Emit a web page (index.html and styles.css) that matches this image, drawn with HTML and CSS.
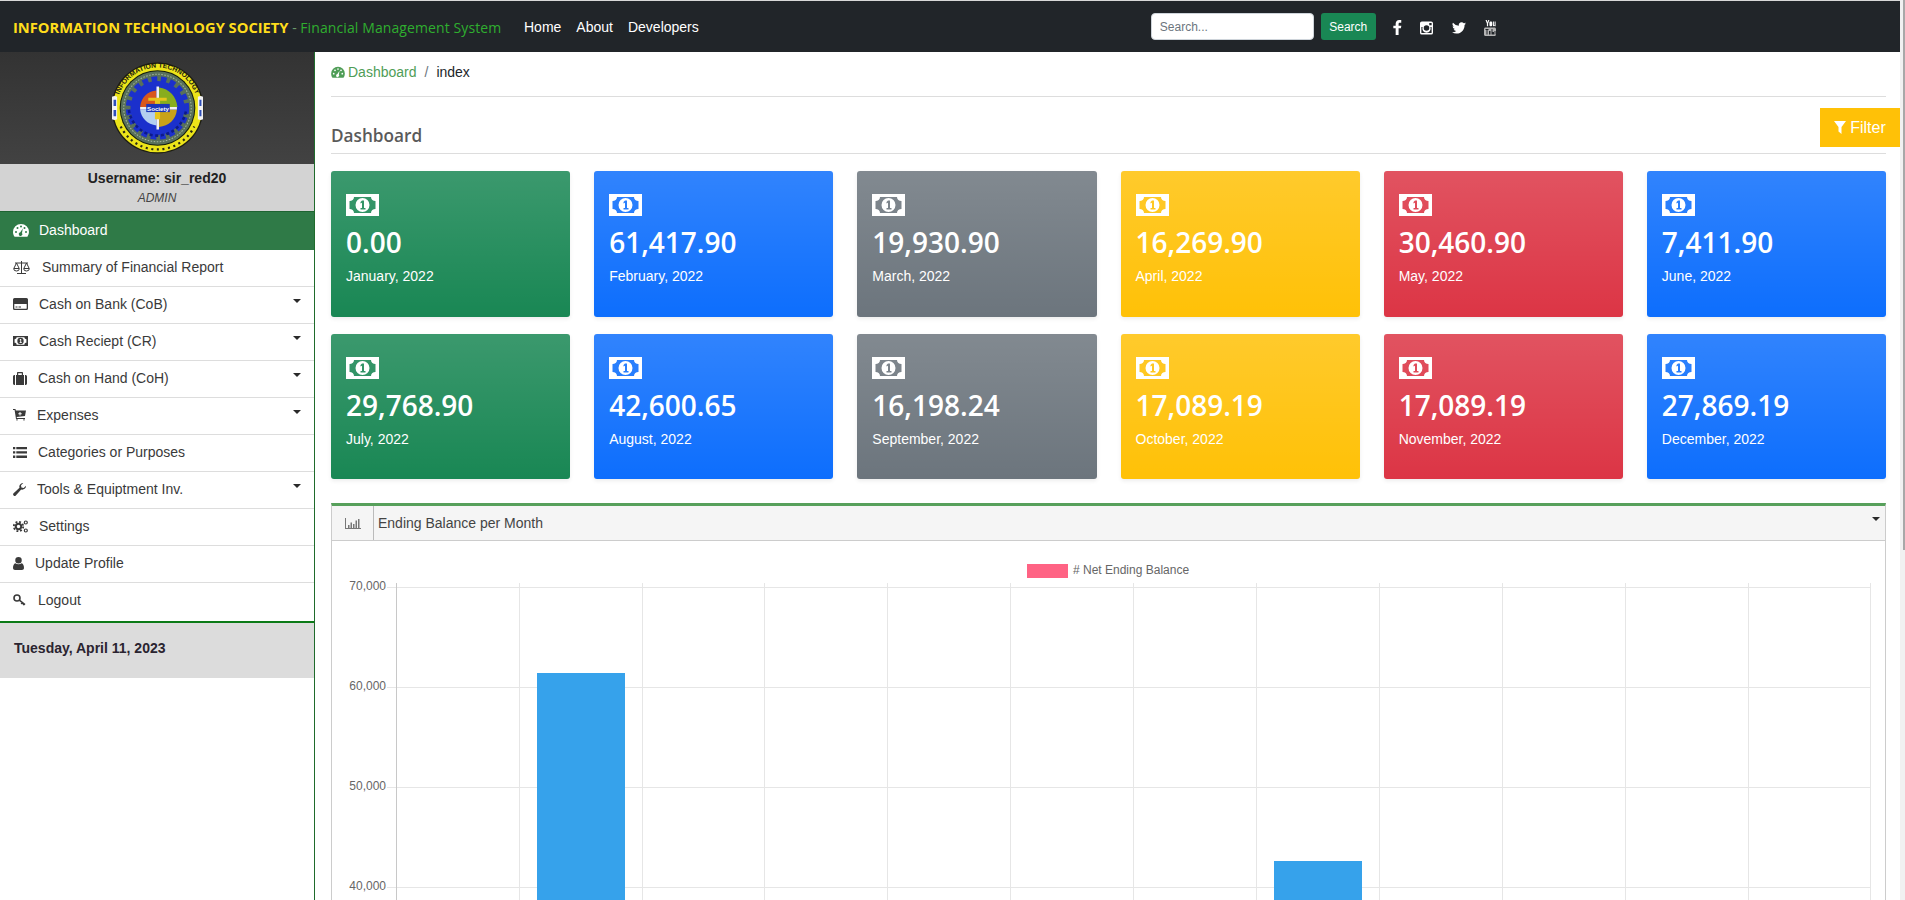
FILE: index.html
```html
<!DOCTYPE html>
<html lang="en">
<head>
<meta charset="utf-8">
<title>Financial Management System</title>
<link rel="stylesheet" href="styles.css">
</head>
<body>
<svg class="defs" width="0" height="0" aria-hidden="true">
  <symbol id="bill" viewBox="0 0 33 22">
    <path fill-rule="evenodd" d="M0 0h33v22H0zM8 3C8 5.500 6 7 3.500 7v8C6 15 8 16.500 8 19h17c0-2.500 2-4 4.500-4V7C27 7 25 5.500 25 3zM16.500 4a7 7 0 1 0 0 14a7 7 0 0 0 0-14zM16 6.500h2v7.500h1.500v1.500h-5V14H16V8.800l-1.500.8V8z"/>
  </symbol>
  <symbol id="gauge" viewBox="0 0 16 14">
    <path fill-rule="evenodd" d="M8 1a8 8 0 0 0-8 8c0 1.800.6 3.400 1.600 4.700h12.800A8 8 0 0 0 16 9a8 8 0 0 0-8-8zM2 9a1 1 0 1 0 2 0a1 1 0 1 0-2 0zM3.500 5a1 1 0 1 0 2 0a1 1 0 1 0-2 0zM7 3.500a1 1 0 1 0 2 0a1 1 0 1 0-2 0zM12 9a1 1 0 1 0 2 0a1 1 0 1 0-2 0zM10.500 5a1 1 0 1 0 2 0a1 1 0 1 0-2 0zM9.800 5.500 7.300 9.300a1.800 1.800 0 1 0 1.700.7z"/>
  </symbol>
</svg>
<div class="fakebar" aria-hidden="true"><div class="fakebar-thumb"></div></div>

<header class="topbar">
  <div class="brand"><span class="brand-org">INFORMATION TECHNOLOGY SOCIETY</span><span class="brand-dash"> - </span><span class="brand-sys">Financial Management System</span></div>
  <nav class="topnav">
    <a>Home</a><a>About</a><a>Developers</a>
  </nav>
  <form class="searchbar">
    <input class="search-input" type="text" placeholder="Search...">
    <button class="search-btn" type="button">Search</button>
  </form>
  <div class="social">
    <svg width="9" height="15" viewBox="0 0 10 18"><path fill="currentColor" d="M9.500 0H7C4.600 0 2.800 1.800 2.800 4.300V7H0v3h2.800v8h3.500v-8h2.800L9.600 7H6.300V4.800c0-.9.400-1.500 1.500-1.500h1.700z"/></svg>
    <svg width="13" height="14" viewBox="0 0 14 14"><path fill="currentColor" fill-rule="evenodd" d="M2 0h10a2 2 0 0 1 2 2v10a2 2 0 0 1-2 2H2a2 2 0 0 1-2-2V2a2 2 0 0 1 2-2zM10 1.500v2.500h2.500V1.500zM1.500 6v6c0 .3.200.5.500.5h10c.3 0 .5-.2.500-.5V6h-1.300a4.500 4.500 0 1 1-8.400 0zM7 4a3 3 0 1 0 0 6a3 3 0 0 0 0-6z"/></svg>
    <svg width="14" height="12" viewBox="0 0 24 20"><path fill="currentColor" d="M24 2.400a10 10 0 0 1-2.800.8A5 5 0 0 0 23.300.5a10 10 0 0 1-3.100 1.200A4.900 4.900 0 0 0 11.800 6.200 14 14 0 0 1 1.700.9a4.900 4.900 0 0 0 1.500 6.600 4.900 4.900 0 0 1-2.200-.6v.1a4.900 4.900 0 0 0 3.900 4.800 5 5 0 0 1-2.200.1 4.900 4.900 0 0 0 4.600 3.400A9.900 9.900 0 0 1 0 17.300 14 14 0 0 0 7.500 19.500c9.100 0 14-7.500 14-14v-.6A10 10 0 0 0 24 2.400z"/></svg>
    <svg width="12" height="16" viewBox="0 0 12 16"><path fill="currentColor" d="M1.500 0h1.300l.7 2.200.7-2.200h1.200L4.100 3.400v2.800H2.900V3.400zM6.800 1.600c.9 0 1.400.5 1.400 1.300v2.100c0 .8-.5 1.300-1.400 1.300s-1.400-.5-1.400-1.300V2.900c0-.8.500-1.300 1.400-1.300zM8.900 1.600h1v3.500c0 .3.400.2.700 0V1.600h1v4.600h-1v-.5c-.7.700-1.700.7-1.700-.4z"/><path fill="#b4b4b4" fill-rule="evenodd" d="M1.500 7.500h9c.8 0 1.500.7 1.500 1.500v5.500c0 .8-.7 1.500-1.500 1.500h-9C.7 16 0 15.300 0 14.500V9c0-.8.700-1.500 1.500-1.500zM1.500 9v1h1v4.500h1V10h1V9zM5 11v3.500h1.500V11zM7.500 9v5.500h2.500V12H8.500V9zM10.500 11v3.500h1V11z"/></svg>
  </div>
</header>

<div class="layout">
  <aside class="sidebar">
    <div class="logo-wrap">
      <svg class="logo" width="95" height="92" viewBox="0 0 92 90">
        <defs><path id="ring-top" d="M6.500 45a39.500 39.500 0 0 1 79 0"/></defs>
        <ellipse cx="46" cy="45" rx="45" ry="44.500" fill="#1d1d12"/>
        <ellipse cx="46" cy="45" rx="43.800" ry="43.300" fill="#ece419"/>
        <path d="M1.500 34c1.700-1 3.500-1 5 0v22c-1.500 1-3.300 1-5 0zM85.500 34c1.700-1 3.500-1 5 0v22c-1.500 1-3.300 1-5 0z" fill="#f3f3f3"/>
        <path d="M3 37h2.500v6H3zM3 47h2.500v6H3zM87 37h2v6h-2zM87 47h2v6h-2z" fill="#2f4fb8"/>
        <path fill="none" stroke="#2a2a15" stroke-width="2.200" stroke-dasharray="2 3.500" d="M10 63a40 40 0 0 0 72 0"/>
        <text class="logo-ring"><textPath href="#ring-top" startOffset="50%" text-anchor="middle">INFORMATION TECHNOLOGY</textPath></text>
        <circle cx="46" cy="45" r="37" fill="#141d10"/>
        <circle cx="46" cy="45" r="36" fill="#58705a"/>
        <circle cx="46" cy="45" r="33" fill="none" stroke="#c8d4c0" stroke-width="1" stroke-dasharray="1.500 1.500" opacity=".7"/>
        <circle cx="46" cy="45" r="28" fill="none" stroke="#1b30cc" stroke-width="6" stroke-dasharray="5.500 3.500"/>
        <circle cx="46" cy="45" r="26.500" fill="#1b30cc"/>
        <path fill="none" stroke="#0c1a8a" stroke-width="2.500" stroke-dasharray="3 2.500" d="M18 47c2 14 14 25 28 25s26-11 28-25"/>
        <path d="M45 28c-9 .5-15 7-16 16h16z" fill="#d9571c"/>
        <path d="M47.500 25c10 1 17 9 18 19H47.500z" fill="#88ad1e"/>
        <path d="M29 46.500h16V62c-9-1-15-7-16-15.500z" fill="#b3cff0"/>
        <path d="M47.500 46.500H65c-1 10-8 16-17.500 17z" fill="#c9a21a"/>
        <path d="M45 24h2.500v42H45zM29 44h36v2.500H29z" fill="#f2f2f2"/>
        <path d="M37 35h18v3H48.500V41h-5v-3H37z" fill="#e8c51c"/>
        <rect x="35" y="41" width="23" height="8" fill="#1d36b8"/>
        <text class="logo-soc" x="46.500" y="47.500">Society</text>
        <path d="M43.500 49h5v7h-5z" fill="#e8c51c"/>
      </svg>
    </div>
    <div class="userbox">
      <div class="user-name">Username: sir_red20</div>
      <div class="user-role">ADMIN</div>
    </div>
    <ul class="menu">
      <li class="menu-item is-active"><svg class="mi" width="16" height="14"><use href="#gauge"/></svg><span>Dashboard</span></li>
      <li class="menu-item"><svg class="mi mi-wide" width="17" height="14" viewBox="0 0 17 14"><path fill="none" stroke="currentColor" d="M8.500 1v12M4 13.500h9M2 3h13M3.500 3 .8 8.500h5.400zM13.500 3l-2.700 5.500h5.400zM.7 8.700a2.800 2.300 0 0 0 5.600 0M10.700 8.700a2.800 2.300 0 0 0 5.600 0"/></svg><span>Summary of Financial Report</span></li>
      <li class="menu-item"><svg class="mi" width="15" height="12" viewBox="0 0 15 12"><path fill="currentColor" fill-rule="evenodd" d="M1.500 0h12A1.500 1.500 0 0 1 15 1.500v9a1.500 1.500 0 0 1-1.500 1.500h-12A1.500 1.500 0 0 1 0 10.500v-9A1.500 1.500 0 0 1 1.500 0zM1.300 6v4.300c0 .2.100.4.400.4h11.600c.3 0 .4-.2.400-.4V6zM2.500 8.500v1h2v-1zM5.500 8.500v1h2.500v-1z"/></svg><span>Cash on Bank (CoB)</span><i class="caret"></i></li>
      <li class="menu-item"><svg class="mi" width="15" height="10"><use href="#bill"/></svg><span>Cash Reciept (CR)</span><i class="caret"></i></li>
      <li class="menu-item"><svg class="mi" width="14" height="13" viewBox="0 0 14 13"><path fill="currentColor" fill-rule="evenodd" d="M0 4.500C0 3.700.7 3 1.500 3H2v10h-.5C.7 13 0 12.300 0 11.500zM12 3h.5c.8 0 1.500.7 1.500 1.500v7c0 .8-.7 1.500-1.500 1.500H12zM3 3h1V1c0-.6.4-1 1-1h4c.6 0 1 .4 1 1v2h1v10H3zM5.200 3h3.600V1.200H5.200z"/></svg><span>Cash on Hand (CoH)</span><i class="caret"></i></li>
      <li class="menu-item"><svg class="mi" width="13" height="12" viewBox="0 0 13 12"><path fill="currentColor" fill-rule="evenodd" d="M0 0h2.500l.3 1.500H13l-1 5.500-8.300 1 .2 1H12v1H3L1.600 1H0zM6.500 3v1.200H5.300v1h1.200v1.200h1V5.200h1.200v-1H7.500V3zM3 10.500a1 1 0 1 0 2 0H3zM10 10.500a1 1 0 1 0 2 0h-2z"/></svg><span>Expenses</span><i class="caret"></i></li>
      <li class="menu-item"><svg class="mi" width="14" height="11" viewBox="0 0 14 11"><path fill="currentColor" d="M0 0h2.300v2.300H0zM3.300 0H14v2.300H3.300zM0 4.300h2.300v2.300H0zM3.300 4.300H14v2.300H3.300zM0 8.600h2.300V11H0zM3.300 8.600H14V11H3.300z"/></svg><span>Categories or Purposes</span></li>
      <li class="menu-item"><svg class="mi" width="13" height="13" viewBox="0 0 13 13"><path fill="currentColor" d="M13 2.700A3.700 3.700 0 0 1 8.200 6.500L2.800 12.400a1.500 1.500 0 0 1-2.200-2.200L6.500 4.800A3.700 3.700 0 0 1 10.300 0L8 2.300l.4 2.300 2.300.4z"/></svg><span>Tools &amp; Equiptment Inv.</span><i class="caret"></i></li>
      <li class="menu-item"><svg class="mi" width="15" height="13" viewBox="0 0 15 13"><circle cx="5.500" cy="6.500" r="2.700" fill="none" stroke="currentColor" stroke-width="2"/><circle cx="5.500" cy="6.500" r="4.700" fill="none" stroke="currentColor" stroke-width="1.800" stroke-dasharray="1.900 1.800"/><circle cx="12.800" cy="2.500" r="1.500" fill="none" stroke="currentColor" stroke-width="1.200"/><circle cx="12.800" cy="10.500" r="1.500" fill="none" stroke="currentColor" stroke-width="1.200"/></svg><span>Settings</span></li>
      <li class="menu-item"><svg class="mi" width="11" height="13" viewBox="0 0 11 13"><path fill="currentColor" d="M5.500 0a3 3 0 1 1 0 6.500a3 3 0 0 1 0-6.500zM2.400 6.300c1.700 1.200 4.500 1.200 6.200 0C10.200 6.800 11 8.600 11 11c0 1.300-.9 2-2 2H2c-1.100 0-2-.7-2-2 0-2.400.8-4.200 2.400-4.700z"/></svg><span>Update Profile</span></li>
      <li class="menu-item menu-last"><svg class="mi" width="13" height="12" viewBox="0 0 13 12"><circle cx="4" cy="4" r="3" fill="none" stroke="currentColor" stroke-width="1.600"/><path fill="none" stroke="currentColor" stroke-width="1.600" d="M6.300 6.200 12 10.600M9.300 8.500l-1 1.500M11 9.800l-.8 1.400"/></svg><span>Logout</span></li>
    </ul>
    <div class="datebox">Tuesday, April 11, 2023</div>
  </aside>

  <main class="content">
    <div class="crumbs">
      <svg class="crumb-ico" width="14" height="12"><use href="#gauge"/></svg>
      <a class="crumb-link">Dashboard</a><span class="crumb-sep">/</span><span>index</span>
    </div>
    <div class="title-row">
      <h1 class="page-title">Dashboard</h1>
      <button class="filter-btn" type="button"><svg width="12" height="13" viewBox="0 0 12 13"><path fill="currentColor" d="M0 0h12L7.500 6v7l-3-2.500V6z"/></svg> Filter</button>
    </div>

    <section class="cards">
      <article class="card c-green"><svg class="bill" width="33" height="22"><use href="#bill"/></svg><div class="amt">0.00</div><div class="mon">January, 2022</div></article>
      <article class="card c-blue"><svg class="bill" width="33" height="22"><use href="#bill"/></svg><div class="amt">61,417.90</div><div class="mon">February, 2022</div></article>
      <article class="card c-gray"><svg class="bill" width="33" height="22"><use href="#bill"/></svg><div class="amt">19,930.90</div><div class="mon">March, 2022</div></article>
      <article class="card c-yellow"><svg class="bill" width="33" height="22"><use href="#bill"/></svg><div class="amt">16,269.90</div><div class="mon">April, 2022</div></article>
      <article class="card c-red"><svg class="bill" width="33" height="22"><use href="#bill"/></svg><div class="amt">30,460.90</div><div class="mon">May, 2022</div></article>
      <article class="card c-blue"><svg class="bill" width="33" height="22"><use href="#bill"/></svg><div class="amt">7,411.90</div><div class="mon">June, 2022</div></article>
      <article class="card c-green"><svg class="bill" width="33" height="22"><use href="#bill"/></svg><div class="amt">29,768.90</div><div class="mon">July, 2022</div></article>
      <article class="card c-blue"><svg class="bill" width="33" height="22"><use href="#bill"/></svg><div class="amt">42,600.65</div><div class="mon">August, 2022</div></article>
      <article class="card c-gray"><svg class="bill" width="33" height="22"><use href="#bill"/></svg><div class="amt">16,198.24</div><div class="mon">September, 2022</div></article>
      <article class="card c-yellow"><svg class="bill" width="33" height="22"><use href="#bill"/></svg><div class="amt">17,089.19</div><div class="mon">October, 2022</div></article>
      <article class="card c-red"><svg class="bill" width="33" height="22"><use href="#bill"/></svg><div class="amt">17,089.19</div><div class="mon">November, 2022</div></article>
      <article class="card c-blue"><svg class="bill" width="33" height="22"><use href="#bill"/></svg><div class="amt">27,869.19</div><div class="mon">December, 2022</div></article>
    </section>

    <section class="panel">
      <div class="panel-head">
        <span class="panel-ico"><svg width="16" height="11" viewBox="0 0 16 11"><path fill="currentColor" d="M0 0h1v10h15v1H0zM3 7h1.500v3H3zM5.500 4.500H7V10H5.500zM8 6h1.500v4H8zM10.500 2.500H12V10h-1.500zM13 1h1.500v9H13z"/></svg></span>
        <span class="panel-title">Ending Balance per Month</span>
        <i class="caret"></i>
      </div>
      <svg class="chart" width="1553" height="900" viewBox="332 541 1553 900">
        <rect x="1027" y="564" width="41" height="14" fill="#ff6384"/>
        <text class="legend" x="1073" y="574">#&#160;Net Ending Balance</text>
        <g class="grid">
          <path d="M387 587.500H1870M387 687.500H1870M387 787.500H1870M387 887.500H1870M387 987.500H1870M387 1087.500H1870M387 1187.500H1870M387 1287.500H1870"/>
          <path d="M519.500 583V1296M642.500 583V1296M764.500 583V1296M887.500 583V1296M1010.500 583V1296M1133.500 583V1296M1256.500 583V1296M1379.500 583V1296M1502.500 583V1296M1625.500 583V1296M1748.500 583V1296M1870.500 583V1296"/>
        </g>
        <path class="axis" d="M396.500 583V1296"/>
        <g class="bars">
          <rect x="537" y="673" width="88" height="614"/>
          <rect x="660" y="1088" width="88" height="199"/>
          <rect x="783" y="1124" width="88" height="163"/>
          <rect x="905" y="983" width="88" height="304"/>
          <rect x="1028" y="1213" width="88" height="74"/>
          <rect x="1151" y="989" width="88" height="298"/>
          <rect x="1274" y="861" width="88" height="426"/>
          <rect x="1397" y="1125" width="88" height="162"/>
          <rect x="1520" y="1116" width="88" height="171"/>
          <rect x="1643" y="1116" width="88" height="171"/>
          <rect x="1765" y="1008" width="88" height="279"/>
        </g>
        <g class="ticks">
          <text x="386" y="590">70,000</text>
          <text x="386" y="690">60,000</text>
          <text x="386" y="790">50,000</text>
          <text x="386" y="890">40,000</text>
          <text x="386" y="990">30,000</text>
          <text x="386" y="1090">20,000</text>
          <text x="386" y="1190">10,000</text>
          <text x="386" y="1290">0</text>
        </g>
      </svg>
    </section>
  </main>
</div>
</body>
</html>
```

FILE: styles.css
```css
* { box-sizing: border-box; }
html { background: #fff; }
html::-webkit-scrollbar { display: none; }
body { margin: 0 5px 0 0; font-family: "Liberation Sans", Arial, sans-serif; font-size: 14px; color: #212529; }
.defs { position: absolute; }
.fakebar { position: fixed; top: 0; right: 0; width: 5px; height: 100vh; background: #f1f1f1; }
.fakebar-thumb { height: 550px; margin-left: 3px; background: #a8a8a8; }

.topbar { height: 52px; border-top: 1px solid #d8d8d8; background: #212529; display: flex; align-items: center; padding-left: 13px; color: #fff; }
.brand { width: 511px; flex: none; font-family: "Open Sans", sans-serif; font-size: 14px; white-space: nowrap; }
.brand-org { color: #ffdd1c; font-size: 14.700px; font-weight: 700; }
.brand-dash { color: #6c9a6c; }
.brand-sys { color: #2fae2f; letter-spacing: .1px; }
.topnav { display: flex; gap: 15px; }
.searchbar { display: flex; gap: 7px; margin-left: 452px; }
.search-input { width: 163px; height: 27px; border: 1px solid #ced4da; border-radius: 4px; padding: 0 8px; font: 12px "Liberation Sans", sans-serif; background: #fff; }
.search-input::placeholder { color: #6c757d; }
.search-btn { width: 55px; height: 27px; border: 0; border-radius: 3px; background: #198754; color: #fff; font: 12px "Liberation Sans", sans-serif; padding: 0; }
.social { display: flex; align-items: center; gap: 18.500px; margin: 2px 0 0 17px; }

.layout { display: flex; }
.sidebar { width: 315px; flex: none; border-right: 1px solid #1f6b2c; background: #fff; }
.logo-wrap { height: 112px; background: linear-gradient(#333, #424242); display: flex; justify-content: center; align-items: center; }
.logo-ring { font: 700 6.800px "Liberation Sans", sans-serif; fill: #1a1a10; }
.logo-soc { font: 700 6px "Liberation Sans", sans-serif; fill: #fff; text-anchor: middle; }
.userbox { height: 47px; background: #d3d3d3; text-align: center; padding-top: 6px; }
.user-name { font-weight: 700; line-height: 16px; color: #222; }
.user-role { font-size: 12px; font-style: italic; color: #444; line-height: 16px; margin-top: 4px; }
.menu { list-style: none; margin: 0; padding: 0; border-bottom: 2px solid #0b7a17; }
.menu-item { height: 37px; display: flex; align-items: center; padding: 0 13px 2px 13px; border-bottom: 1px solid #ddd; color: #3a3a3a; }
.menu-item .mi { flex: none; margin-right: 11px; fill: currentColor; }
.menu-item .mi-wide { margin-right: 12px; }
.menu-item.is-active { height: 39px; background: #2f7a47; border-top: 1px solid #1f6432; border-bottom: 0; color: #fff; }
.menu-item.is-active .mi { margin-right: 10px; }
.menu-item.menu-last { height: 38px; border-bottom: 0; padding-bottom: 4px; }
.menu-last .mi { margin-right: 12px; }
.caret { margin-left: auto; margin-bottom: 7px; width: 0; height: 0; border-top: 4.500px solid #2a2a2a; border-left: 4.500px solid transparent; border-right: 4.500px solid transparent; }
.datebox { height: 55px; background: #dcdcdc; padding: 17px 14px 0; font-weight: 700; color: #2a2430; }

.content { flex: 1; min-width: 0; padding: 0 14px 31px 16px; }
.crumbs { height: 45px; border-bottom: 1px solid #ddd; display: flex; align-items: center; padding-bottom: 5px; color: #212529; }
.crumb-ico { fill: #4f9d57; margin-right: 3px; flex: none; }
.crumb-link { color: #4f9d57; }
.crumb-sep { color: #6c757d; margin: 0 8px; }
.title-row { height: 57px; display: flex; justify-content: space-between; align-items: flex-start; border-bottom: 1px solid #ddd; }
.page-title { margin: 27px 0 0; font: 600 17.200px/24px "Open Sans", sans-serif; color: #5a5a5a; }
.filter-btn { margin: 11px -14px 0 0; width: 80px; height: 39px; border: 0; background: #ffc107; color: #fff; font: 16px "Liberation Sans", sans-serif; padding: 0; display: flex; align-items: center; justify-content: center; gap: 4px; }

.cards { display: grid; grid-template-columns: repeat(6, 1fr); column-gap: 24px; row-gap: 17px; margin: 17px 0 0; }
.card { height: 145.500px; border-radius: 3px; padding: 23px 15px 0; color: #fff; box-shadow: 0 2px 4px rgba(0,0,0,.075); background-image: linear-gradient(180deg, rgba(255,255,255,.15), rgba(255,255,255,0)); }
.bill { display: block; fill: #fff; }
.amt { font: 600 28px/36px "Open Sans", sans-serif; margin-top: 8px; }
.mon { margin-top: 7px; line-height: 18px; }
.c-green { background-color: #198754; }
.c-blue { background-color: #0d6efd; }
.c-gray { background-color: #6c757d; }
.c-yellow { background-color: #ffc107; }
.c-red { background-color: #dc3545; }

.panel { margin-top: 24px; border: 1px solid #ccc; border-top: 3px solid #57a05b; }
.panel-head { height: 35px; background: #f5f5f5; border-bottom: 1px solid #ccc; display: flex; align-items: center; padding-right: 5px; color: #444; }
.panel-head .caret { margin-bottom: 8px; }
.panel-ico { width: 42px; height: 100%; border-right: 1px solid #bbb; display: flex; align-items: center; justify-content: center; color: #777; }
.panel-title { margin: 0 0 1px 4px; }
.chart { display: block; }
.legend { font: 12px "Liberation Sans", sans-serif; fill: #666; }
.grid path { fill: none; stroke: #e6e6e6; stroke-width: 1; }
.axis { fill: none; stroke: #c8c8c8; stroke-width: 1; }
.bars rect { fill: #36a2eb; }
.ticks text { font: 12px "Liberation Sans", sans-serif; fill: #666; text-anchor: end; }
```
